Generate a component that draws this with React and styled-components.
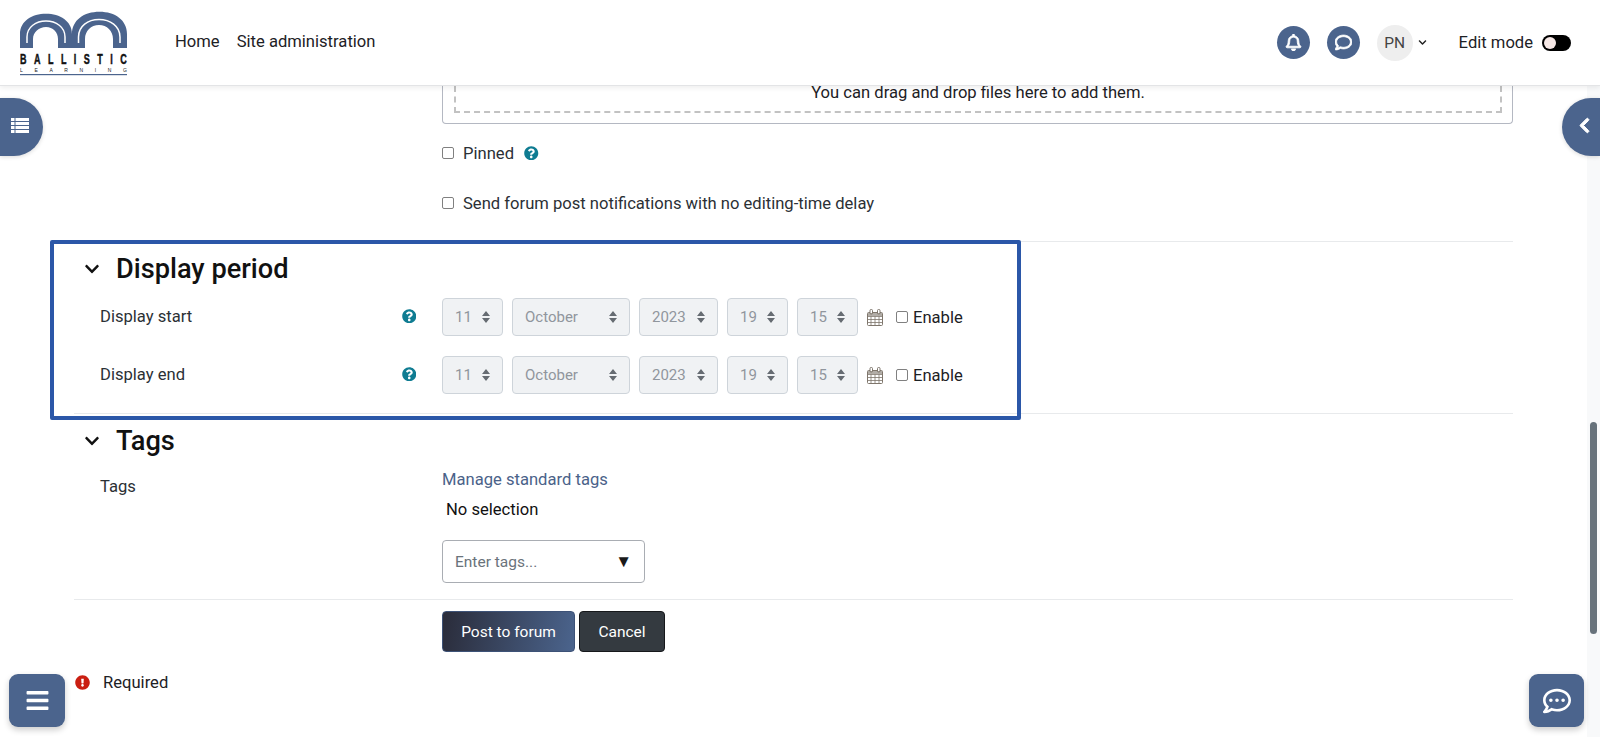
import React from 'react'
import styled, { createGlobalStyle } from 'styled-components'
import {
  FaBars,
  FaChevronDown,
  FaChevronLeft,
  FaExclamationCircle,
  FaQuestionCircle,
  FaRegBell,
  FaRegComment,
  FaRegCommentDots,
} from 'react-icons/fa'

const PRIMARY = '#4b648d'
const INK = '#1d2125'

const sortArrows =
  "data:image/svg+xml,%3Csvg xmlns='http://www.w3.org/2000/svg' viewBox='0 0 8 12'%3E%3Cpath fill='%23666c72' d='M4 0l4 5H0zM4 12L0 7h8z'/%3E%3C/svg%3E"

const GlobalStyle = createGlobalStyle`
  html, body {
    margin: 0;
    padding: 0;
    background: #fff;
    overflow: hidden;
  }
  body {
    font-family: Roboto, "Liberation Sans", sans-serif;
    font-size: 16.6px;
    color: ${INK};
  }
`

const Logo = () => (
  <LogoSvg viewBox="20 8 108 68">
    <g fill={PRIMARY}>
      <path d="M20 47V33C20 20 32 12.7 46 12.7S72 20 72 33V47H58V38C58 31 53 26 46 26S33 31 33 38V47Z" />
      <path d="M72 47V33C72 19 84 10.7 99.500 10.700S127 19 127 33V47H113V38C113 30 107 24 99 24S85 30 85 38V47Z" />
    </g>
    <g fill="none" stroke="#fff" strokeWidth="1.5">
      <path d="M27 42V36C27 26 36 20 46 20S65 26 65 36V42" />
      <path d="M78.500 42V36C78.500 25 88 18.500 99 18.500S120 25 120 36V42" />
    </g>
    <g transform="scale(0.6 1)">
      <LogoName x="33.300" y="63" textLength="178">
        BALLISTIC
      </LogoName>
    </g>
    <LogoSub x="20" y="71" textLength="107">
      LEARNING
    </LogoSub>
    <rect x="20" y="73" width="107" height="1.2" fill={PRIMARY} />
  </LogoSvg>
)

// four rows, a small block and a long bar each
const ListIcon = () => (
  <svg width="18" height="15" viewBox="0 0 18 15" fill="#fff">
    <path d="M0 0h3.500v3H0zM4.500 0H18v3H4.500zM0 4h3.500v3H0zM4.500 4H18v3H4.500zM0 8h3.500v3H0zM4.500 8H18v3H4.500zM0 12h3.500v3H0zM4.500 12H18v3H4.500z" />
  </svg>
)

const CalendarIcon = () => (
  <svg width="16" height="17" viewBox="0 0 16 17">
    <g fill="none" stroke="#7f766c" strokeWidth="1">
      <rect x="0.500" y="3.500" width="15" height="13" rx="1" />
      <path d="M0.500 7.500h15M0.500 10.500h15M0.500 13.500h15M4 7.500v9M8 7.500v9M12 7.500v9" strokeWidth="0.8" />
      <rect x="3" y="0.500" width="2.500" height="4.500" rx="1" fill="#fff" />
      <rect x="10.500" y="0.500" width="2.500" height="4.500" rx="1" fill="#fff" />
    </g>
    <rect x="1" y="4" width="14" height="3" fill="#7f766c" opacity="0.6" />
  </svg>
)

const DateSelector = () => (
  <DateGroup>
    <DateSelect disabled $width={61} defaultValue="11">
      <option>11</option>
    </DateSelect>
    <DateSelect disabled $width={118} defaultValue="October">
      <option>October</option>
    </DateSelect>
    <DateSelect disabled $width={79} defaultValue="2023">
      <option>2023</option>
    </DateSelect>
    <DateSelect disabled $width={61} defaultValue="19">
      <option>19</option>
    </DateSelect>
    <DateSelect disabled $width={61} defaultValue="15">
      <option>15</option>
    </DateSelect>
    <CalendarSlot>
      <CalendarIcon />
    </CalendarSlot>
    <EnableLabel>
      <Check type="checkbox" />
      Enable
    </EnableLabel>
  </DateGroup>
)

const App = () => (
  <Page>
    <GlobalStyle />
    <Header>
      <Brand>
        <Logo />
      </Brand>
      <Nav>
        <NavLink>Home</NavLink>
        <NavLink>Site administration</NavLink>
      </Nav>
      <Tools>
        <RoundIcon>
          <FaRegBell stroke="currentColor" strokeWidth="24" />
        </RoundIcon>
        <RoundIcon>
          <FaRegComment
            width="20"
            height="16"
            preserveAspectRatio="none"
            stroke="currentColor"
            strokeWidth="24"
          />
        </RoundIcon>
        <UserMenu>
          <Avatar>PN</Avatar>
          <FaChevronDown />
        </UserMenu>
        <EditMode>
          Edit mode
          <Toggle>
            <Knob />
          </Toggle>
        </EditMode>
      </Tools>
    </Header>

    <Body>
      <Main>
        <FilePicker>
          <DropZone>You can drag and drop files here to add them.</DropZone>
        </FilePicker>

        <CheckRow $top={17}>
          <Check type="checkbox" />
          <CheckText>Pinned</CheckText>
          <Help $gap={10}>
            <FaQuestionCircle />
          </Help>
        </CheckRow>
        <CheckRow $top={26}>
          <Check type="checkbox" />
          <CheckText>Send forum post notifications with no editing-time delay</CheckText>
        </CheckRow>

        <Section $top={26} $bottom={19}>
          <SectionTitle>
            <FaChevronDown />
            Display period
          </SectionTitle>
          <FieldRow $top={11}>
            <FieldLabel>
              Display start
              <Help>
                <FaQuestionCircle />
              </Help>
            </FieldLabel>
            <DateSelector />
          </FieldRow>
          <FieldRow $top={20}>
            <FieldLabel>
              Display end
              <Help>
                <FaQuestionCircle />
              </Help>
            </FieldLabel>
            <DateSelector />
          </FieldRow>
        </Section>

        <Section $bottom={16}>
          <SectionTitle>
            <FaChevronDown />
            Tags
          </SectionTitle>
          <FieldRow $top={10}>
            <TagsLabel>Tags</TagsLabel>
            <TagsColumn>
              <TagsLink>Manage standard tags</TagsLink>
              <NoSelection>No selection</NoSelection>
              <TagsInput>
                <input placeholder="Enter tags..." />
                <span>▼</span>
              </TagsInput>
            </TagsColumn>
          </FieldRow>
        </Section>

        <Actions>
          <PrimaryButton>Post to forum</PrimaryButton>
          <CancelButton>Cancel</CancelButton>
        </Actions>

        <Required>
          <FaExclamationCircle />
          Required
        </Required>

        <Highlight />
      </Main>
      <Track>
        <Thumb />
      </Track>
    </Body>

    <DrawerLeft>
      <ListIcon />
    </DrawerLeft>
    <DrawerRight>
      <FaChevronLeft stroke="currentColor" strokeWidth="30" />
    </DrawerRight>
    <FloatButton $side="left">
      <FaBars />
    </FloatButton>
    <FloatButton $side="right">
      <FaRegCommentDots />
    </FloatButton>
  </Page>
)

const Page = styled.div`
  position: relative;
  display: flex;
  flex-direction: column;
  height: 737px;
  overflow: hidden;
`

const Header = styled.header`
  position: relative;
  z-index: 3;
  flex: 0 0 86px;
  box-sizing: border-box;
  display: flex;
  align-items: center;
  background: #fff;
  border-bottom: 1px solid #e3e4e6;
  box-shadow: 0 2px 5px rgba(0, 0, 0, 0.07);
`

const Brand = styled.div`
  display: flex;
  margin: 0 0 0 20px;
`

const LogoSvg = styled.svg`
  display: block;
  width: 108px;
  height: 68px;
`

const LogoName = styled.text`
  font-family: 'Liberation Sans', sans-serif;
  font-size: 15px;
  font-weight: 700;
  fill: #111;
  stroke: #111;
  stroke-width: 0.5px;
`

const LogoSub = styled.text`
  font-family: 'Liberation Sans', sans-serif;
  font-size: 5px;
  fill: #222;
`

const Nav = styled.nav`
  display: flex;
  gap: 17px;
  margin-left: 47px;
  margin-top: -2px;
`

const NavLink = styled.a`
  font-size: 16.6px;
  color: ${INK};
`

const Tools = styled.div`
  display: flex;
  align-items: center;
  margin-left: auto;
  padding-right: 29px;
`

const RoundIcon = styled.span`
  display: flex;
  align-items: center;
  justify-content: center;
  width: 33px;
  height: 33px;
  margin-right: 17px;
  border-radius: 50%;
  background: ${PRIMARY};
  color: #fff;

  svg {
    font-size: 17px;
  }
`

const UserMenu = styled.div`
  display: flex;
  align-items: center;
  gap: 5px;
  margin-right: 32px;

  svg {
    font-size: 9px;
    color: #222;
  }
`

const Avatar = styled.span`
  display: flex;
  align-items: center;
  justify-content: center;
  width: 36px;
  height: 36px;
  border-radius: 50%;
  background: #eeeeee;
  color: #444;
  font-size: 15.5px;
`

const EditMode = styled.div`
  display: flex;
  align-items: center;
  gap: 9px;
  color: ${INK};
`

const Toggle = styled.span`
  display: flex;
  align-items: center;
  box-sizing: border-box;
  width: 29px;
  height: 16px;
  padding: 2px;
  border-radius: 8px;
  background: #000;
`

const Knob = styled.span`
  width: 12px;
  height: 12px;
  border-radius: 50%;
  background: #f6e8e6;
`

const Body = styled.div`
  flex: 1;
  display: flex;
  min-height: 0;
`

const Main = styled.main`
  position: relative;
  flex: 1;
  box-sizing: border-box;
  padding: 0 74px;
`

const Track = styled.div`
  flex: 0 0 13px;
  box-sizing: border-box;
  padding: 336px 3px 0;
  background: #f8f9fa;
`

const Thumb = styled.div`
  width: 7px;
  height: 212px;
  border-radius: 4px;
  background: #67727b;
`

const FilePicker = styled.div`
  box-sizing: border-box;
  height: 38px;
  margin-left: 368px;
  padding: 0 10px 10px 11px;
  border: 1px solid #b4b8c2;
  border-top: 0;
  border-radius: 0 0 4px 4px;
`

const DropZone = styled.div`
  box-sizing: border-box;
  height: 100%;
  border: 2px dashed #c2c2c2;
  border-top: 0;
  text-align: center;
  line-height: 13px;
`

const CheckRow = styled.div`
  display: flex;
  align-items: center;
  height: 24px;
  margin: ${(p) => p.$top}px 0 0 368px;
`

const Check = styled.input`
  appearance: none;
  box-sizing: border-box;
  width: 12px;
  height: 12px;
  margin: 0;
  border: 1px solid #808080;
  border-radius: 2px;
  background: #fff;
`

const CheckText = styled.span`
  margin-left: 9px;
  color: #2b3035;
`

const Help = styled.span`
  display: inline-flex;
  margin-left: ${(p) => p.$gap || 0}px;
  font-size: 14.5px;
  color: #0f7c92;
`

const Section = styled.section`
  margin-top: ${(p) => p.$top || 0}px;
  padding: 9px 0 ${(p) => p.$bottom}px;
  border-top: 1px solid #e8eaec;
`

const SectionTitle = styled.h3`
  display: flex;
  align-items: center;
  height: 36px;
  margin: 0;
  padding-left: 10px;
  font-size: 27.2px;
  font-weight: 500;
  color: #111;

  svg {
    width: 16px;
    height: 16px;
    margin-right: 16px;
  }
`

const FieldRow = styled.div`
  display: grid;
  grid-template-columns: 368px 1fr;
  margin-top: ${(p) => p.$top}px;
`

const FieldLabel = styled.label`
  display: flex;
  align-items: center;
  justify-content: space-between;
  padding: 0 26px 2px;
  color: #2b3035;
`

const DateGroup = styled.div`
  display: flex;
  align-items: center;
  gap: 9px;
`

const DateSelect = styled.select`
  appearance: none;
  box-sizing: border-box;
  width: ${(p) => p.$width}px;
  height: 38px;
  padding: 0 0 0 12px;
  border: 1px solid #ced4da;
  border-radius: 4px;
  background: #f0f2f4 url("${sortArrows}") no-repeat right 12px center / 8px 12px;
  font-family: Roboto, sans-serif;
  font-size: 15px;
  color: #90969d;
  opacity: 1;
`

const CalendarSlot = styled.span`
  display: flex;
  margin-right: 4px;
`

const EnableLabel = styled.label`
  display: flex;
  align-items: center;
  gap: 5px;
  color: ${INK};
`

const TagsLabel = styled.label`
  padding: 8px 0 0 26px;
  color: #2b3035;
`

const TagsColumn = styled.div`
  display: flex;
  flex-direction: column;
  align-items: flex-start;
`

const TagsLink = styled.a`
  line-height: 22px;
  color: #4a6289;
`

const NoSelection = styled.div`
  margin: 8px 0 0 4px;
  line-height: 22px;
  color: #111;
`

const TagsInput = styled.div`
  display: flex;
  align-items: center;
  box-sizing: border-box;
  width: 203px;
  height: 43px;
  margin-top: 19px;
  padding: 0 12px 0 12px;
  border: 1px solid #a9adb3;
  border-radius: 4px;

  input {
    flex: 1;
    min-width: 0;
    padding: 0;
    border: 0;
    outline: 0;
    font-family: Roboto, sans-serif;
    font-size: 15.500px;
  }

  input::placeholder {
    color: #6a737b;
  }

  span {
    font-size: 17px;
    color: #1a1a1a;
  }
`

const Actions = styled.div`
  display: flex;
  gap: 4px;
  padding: 11px 0 0 368px;
  border-top: 1px solid #e8eaec;
`

const PrimaryButton = styled.button`
  width: 133px;
  height: 41px;
  padding: 0;
  border: 1px solid #3d5277;
  border-radius: 4px;
  background: linear-gradient(100deg, #2a2c3a, ${PRIMARY});
  font-family: Roboto, sans-serif;
  font-size: 15.500px;
  color: #fff;
`

const CancelButton = styled.button`
  width: 86px;
  height: 41px;
  padding: 0;
  border: 1px solid #16181b;
  border-radius: 4px;
  background: #343a40;
  font-family: Roboto, sans-serif;
  font-size: 15.500px;
  color: #fff;
`

const Required = styled.div`
  display: flex;
  align-items: center;
  height: 24px;
  margin: 18px 0 0 1px;
  color: ${INK};

  svg {
    width: 15px;
    height: 15px;
    margin-right: 13px;
    color: #ca1f12;
  }
`

const Highlight = styled.div`
  position: absolute;
  top: 154px;
  left: 50px;
  box-sizing: border-box;
  width: 971px;
  height: 180px;
  border: 4px solid #2b57a8;
  border-radius: 2px;
  pointer-events: none;
`

const Drawer = styled.span`
  position: absolute;
  z-index: 2;
  top: 98px;
  display: flex;
  align-items: center;
  height: 58px;
  background: ${PRIMARY};
  color: #fff;
  box-shadow: 0 1px 4px rgba(0, 0, 0, 0.15);
`

const DrawerLeft = styled(Drawer)`
  left: 0;
  width: 43px;
  padding: 0 0 4px 11px;
  box-sizing: border-box;
  border-radius: 0 29px 29px 0;
`

const DrawerRight = styled(Drawer)`
  right: 0;
  width: 38px;
  padding: 0 0 4px 14px;
  box-sizing: border-box;
  border-radius: 29px 0 0 29px;
  font-size: 17px;
`

const FloatButton = styled.span`
  position: absolute;
  z-index: 2;
  top: 674px;
  ${(p) => (p.$side === 'left' ? 'left: 9px;' : 'left: 1529px;')}
  display: flex;
  align-items: center;
  justify-content: center;
  width: ${(p) => (p.$side === 'left' ? 56 : 55)}px;
  height: 53px;
  border-radius: 9px;
  background: ${PRIMARY};
  color: #fff;
  box-shadow: 0 3px 6px rgba(0, 0, 0, 0.2);

  svg {
    font-size: ${(p) => (p.$side === 'left' ? 25 : 28)}px;
  }
`

export default App
